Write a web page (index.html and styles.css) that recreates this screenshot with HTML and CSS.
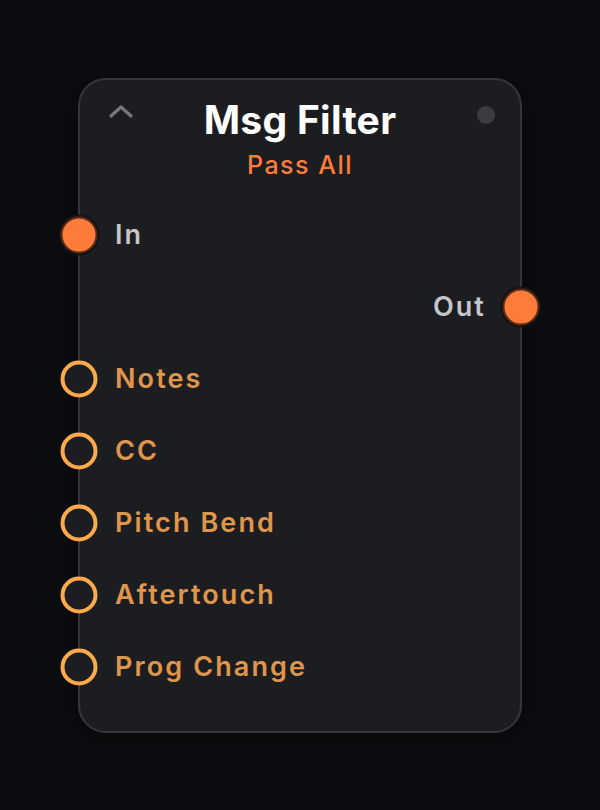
FILE: index.html
```html
<!DOCTYPE html>
<html>
  <head>
    <title>Msg Filter</title>
    <link rel="stylesheet" href="styles.css">
  </head>
  <body>
    <div class="node">
      <div class="node-header">
        <svg class="collapse" width="26" height="16" viewBox="0 0 26 16">
          <path d="M3 13 L13 4 L23 13" fill="none" stroke="#77787d" stroke-width="3.2" stroke-linecap="round" stroke-linejoin="round" />
        </svg>
        <span class="status-dot"></span>
        <div class="node-title">Msg Filter</div>
        <div class="node-mode">Pass All</div>
      </div>

      <div class="port-row input">
        <span class="handle filled"></span>
        <span class="port-label">In</span>
      </div>
      <div class="port-row output">
        <span class="port-label">Out</span>
        <span class="handle filled"></span>
      </div>
      <div class="port-row input toggle">
        <span class="handle ring"></span>
        <span class="port-label">Notes</span>
      </div>
      <div class="port-row input toggle">
        <span class="handle ring"></span>
        <span class="port-label">CC</span>
      </div>
      <div class="port-row input toggle">
        <span class="handle ring"></span>
        <span class="port-label">Pitch Bend</span>
      </div>
      <div class="port-row input toggle">
        <span class="handle ring"></span>
        <span class="port-label">Aftertouch</span>
      </div>
      <div class="port-row input toggle">
        <span class="handle ring"></span>
        <span class="port-label">Prog Change</span>
      </div>
    </div>
  </body>
</html>
```

FILE: styles.css
```css
body {
  margin: 0;
  height: 810px;
  background-color: #0c0d10;
  font-family: Inter, "Noto Sans", sans-serif;
  display: flex;
  align-items: center;
  justify-content: center;
}
.node {
  position: relative;
  width: 440px;
  padding-bottom: 28px;
  background-color: #1c1d21;
  border: 2px solid #35363b;
  border-radius: 28px;
  box-shadow: 0 6px 24px rgba(0, 0, 0, 0.45);
}
.node-header {
  position: relative;
  padding-top: 18px;
  margin-bottom: 18px;
  text-align: center;
}
.collapse {
  position: absolute;
  left: 28px;
  top: 23px;
}
.status-dot {
  position: absolute;
  right: 25px;
  top: 26px;
  width: 18px;
  height: 18px;
  border-radius: 50%;
  background-color: #3b3c41;
}
.node-title {
  font-size: 39px;
  font-weight: 700;
  line-height: 44px;
  letter-spacing: 0.3px;
  color: #ffffff;
}
.node-mode {
  margin-top: 7px;
  font-size: 25px;
  font-weight: 500;
  line-height: 32px;
  letter-spacing: 1.5px;
  color: #ff7b3a;
}
.port-row {
  position: relative;
  height: 72px;
  display: flex;
  align-items: center;
  font-size: 27px;
  font-weight: 600;
}
.port-row.input {
  padding-left: 35px;
}
.port-row.output {
  justify-content: flex-end;
  padding-right: 36px;
}
.port-label {
  color: #c6c6ca;
  letter-spacing: 2.1px;
}
.output .port-label {
  margin-right: -2px;
}
.toggle .port-label {
  color: #e0964a;
}
.handle {
  position: absolute;
  top: 50%;
  width: 37px;
  height: 37px;
  box-sizing: border-box;
  border-radius: 50%;
  transform: translate(-50%, -50%);
}
.input .handle {
  left: -1px;
}
.output .handle {
  left: calc(100% + 1px);
}
.handle.filled {
  background-color: #ff7b3a;
  border: 2px solid #5a2a14;
  box-shadow: 0 0 0 2px #121215;
}
.handle.ring {
  background-color: #1c1d21;
  border: 4px solid #ffaa4a;
}
```
